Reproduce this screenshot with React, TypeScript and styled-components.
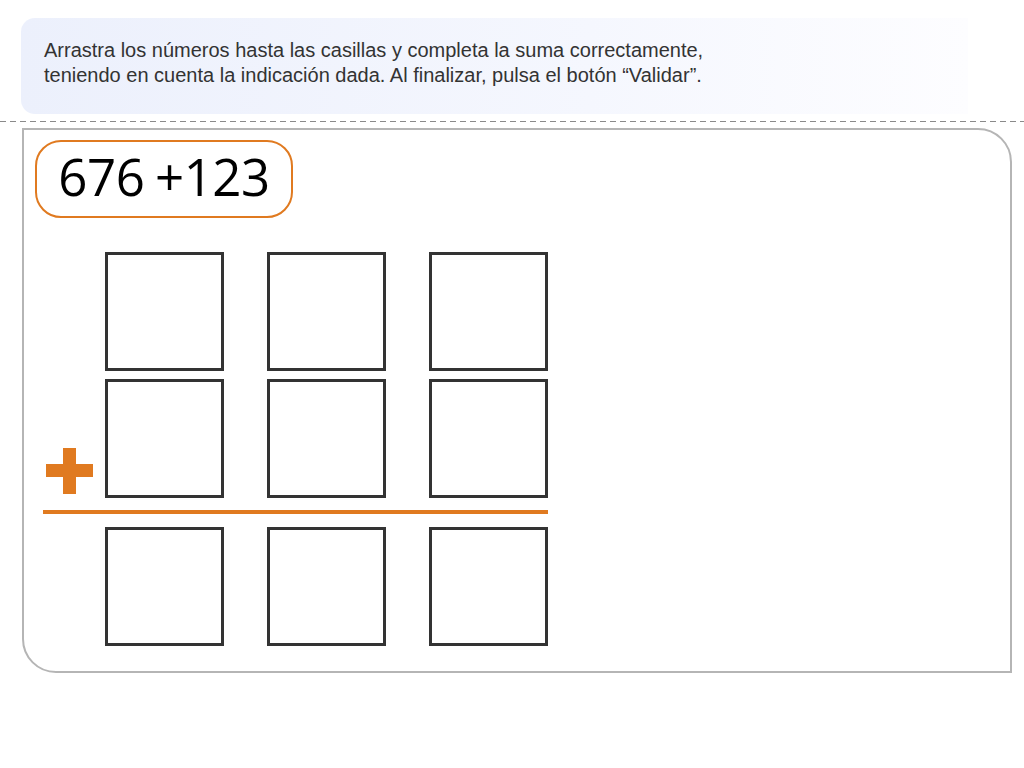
import React from 'react';
import styled, { createGlobalStyle } from 'styled-components';

const GlobalStyle = createGlobalStyle`
    html, body {
        margin: 0;
        padding: 0;
        background: #ffffff;
    }
    body {
        font-family: "Liberation Sans", Arial, sans-serif;
    }
`;

const Page = styled.div`
    width: 1024px;
    height: 768px;
    padding-top: 18px;
    box-sizing: border-box;
`;

const Instructions = styled.div`
    margin: 0 56px 0 21px;
    height: 96px;
    box-sizing: border-box;
    padding: 20px 23px 0;
    border-radius: 14px 0 0 14px;
    background: linear-gradient(to right, #ecf0fc 0%, #f5f7fe 60%, #fdfdff 100%);
    color: #333333;
    font-size: 20px;
    line-height: 25px;
`;

const Divider = styled.div`
    margin-top: 7px;
    height: 1px;
    background-image: linear-gradient(to right, #8a8a8a 0 6px, transparent 6px 10px);
    background-size: 10px 1px;
`;

const Card = styled.div`
    margin: 6px 0 0 22px;
    width: 990px;
    height: 545px;
    box-sizing: border-box;
    border: 2px solid #b5b5b5;
    border-radius: 0 34px 0 34px;
    padding: 10px 0 0 11px;
`;

const Expression = styled.div`
    display: inline-flex;
    align-items: center;
    justify-content: center;
    width: 258px;
    height: 78px;
    box-sizing: border-box;
    padding-bottom: 6px;
    border: 2px solid #e07a20;
    border-radius: 26px;
    font-family: "Open Sans", sans-serif;
    font-size: 51px;
    color: #000000;
    letter-spacing: -0.5px;
    word-spacing: -2px;
`;

const Sum = styled.div`
    margin: 34px 0 0 8px;
    width: 505px;
    display: flex;
    flex-direction: column;
`;

const Row = styled.div<{ $gapAfter?: number }>`
    display: flex;
    gap: 43px;
    margin-bottom: ${p => p.$gapAfter ?? 0}px;
`;

const SignSlot = styled.div`
    width: 19px;
    position: relative;
`;

const PlusSign = styled.div`
    position: absolute;
    left: 3px;
    bottom: 4px;
    width: 47px;
    height: 46px;
    &::before, &::after {
        content: '';
        position: absolute;
        background: #e07a20;
    }
    &::before {
        left: 0;
        right: 0;
        top: 16px;
        height: 13px;
    }
    &::after {
        top: 0;
        bottom: 0;
        left: 17px;
        width: 13px;
    }
`;

const Box = styled.div`
    width: 119px;
    height: 119px;
    box-sizing: border-box;
    border: 3px solid #333333;
    background: #ffffff;
`;

const Rule = styled.div`
    height: 4px;
    background: #e07a20;
    margin-bottom: 13px;
`;

const BoxRow: React.FC<{ sign?: boolean; gapAfter?: number }> = ({ sign, gapAfter }) => (
    <Row $gapAfter={gapAfter}>
        <SignSlot>{sign && <PlusSign />}</SignSlot>
        <Box />
        <Box />
        <Box />
    </Row>
);

const App: React.FC = () => {
    return (
        <Page>
            <GlobalStyle />
            <Instructions>
                Arrastra los números hasta las casillas y completa la suma correctamente,
                <br />
                teniendo en cuenta la indicación dada. Al finalizar, pulsa el botón “Validar”.
            </Instructions>
            <Divider />
            <Card>
                <Expression>676 +123</Expression>
                <Sum>
                    <BoxRow gapAfter={8} />
                    <BoxRow sign gapAfter={12} />
                    <Rule />
                    <BoxRow />
                </Sum>
            </Card>
        </Page>
    );
};

export default App;
